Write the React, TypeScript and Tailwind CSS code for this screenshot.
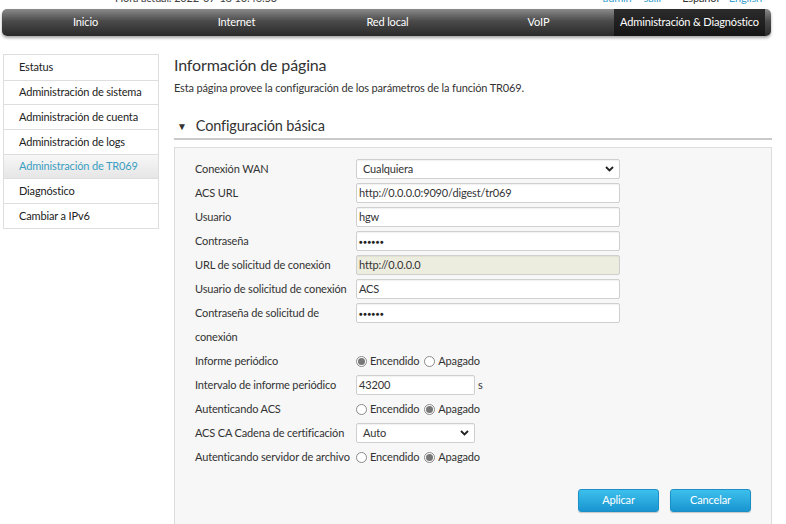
import type { ReactNode } from "react";

const tabs = ["Inicio", "Internet", "Red local", "VoIP", "Administración & Diagnóstico"];

const menu = [
  "Estatus",
  "Administración de sistema",
  "Administración de cuenta",
  "Administración de logs",
  "Administración de TR069",
  "Diagnóstico",
  "Cambiar a IPv6",
];

function Chevron() {
  return (
    <svg width="9" height="6" viewBox="0 0 9 6" className="shrink-0">
      <path d="M1 1l3.5 3.5L8 1" fill="none" stroke="#222" strokeWidth="1.8" />
    </svg>
  );
}

function Field({
  children,
  w = "w-[264px]",
  tone = "bg-white",
}: {
  children: ReactNode;
  w?: string;
  tone?: string;
}) {
  return (
    <div
      className={`my-[2px] flex h-[20px] items-center rounded-[2px] border border-[#cfcfcf] px-[2px] text-[11px] text-[#333] shadow-[inset_0_1px_1px_rgba(0,0,0,0.06)] ${w} ${tone}`}
    >
      {children}
    </div>
  );
}

function Select({ value, w }: { value: string; w?: string }) {
  return (
    <Field w={w}>
      <span className="flex-1 pl-[4px]">{value}</span>
      <span className="pr-[3px]">
        <Chevron />
      </span>
    </Field>
  );
}

function Dots() {
  return <span className="text-[6px] tracking-[0.6px] text-[#222]">●●●●●●</span>;
}

function Radio({ on }: { on?: boolean }) {
  return (
    <span className="flex size-[11px] items-center justify-center rounded-full border border-[#8a8a8a] bg-white">
      {on && <span className="size-[7px] rounded-full bg-[#777]" />}
    </span>
  );
}

function Radios({ first }: { first: boolean }) {
  return (
    <div className="flex h-[24px] items-center text-[11px] text-[#333]">
      <Radio on={first} />
      <span className="ml-[3px]">Encendido</span>
      <span className="ml-[5px]">
        <Radio on={!first} />
      </span>
      <span className="ml-[3px]">Apagado</span>
    </div>
  );
}

function Row({ label, children }: { label: string; children: ReactNode }) {
  return (
    <div className="flex items-start">
      <div className="w-[181px] shrink-0 pl-[20px] pr-[2px] text-[11px] leading-[24px] text-[#333]">{label}</div>
      <div className="flex items-center">{children}</div>
    </div>
  );
}

export default function App() {
  return (
    <div className="h-[524px] w-[786px] overflow-hidden bg-white font-['Lato','Noto_Sans',sans-serif] tracking-[-0.15px]">
      {/* cut-off strip above the bar */}
      <div className="relative flex h-[9px] overflow-hidden text-[11px] leading-[14px]">
        <span className="ml-[115px] -mt-[9px] text-[#444]">Hora actual: 2022-07-18 10:46:53</span>
        <span className="ml-auto -mt-[9px] text-[#3a9fd0]">admin</span>
        <span className="ml-[12px] -mt-[9px] text-[#3a9fd0]">salir</span>
        <span className="ml-[20px] -mt-[9px] text-[#333]">Español</span>
        <span className="ml-[10px] mr-[24px] -mt-[9px] text-[#3a9fd0]">English</span>
      </div>

      <nav className="ml-[2px] flex h-[27px] w-[769px] items-stretch overflow-hidden rounded-[5px] bg-[linear-gradient(#8a8a8a,#4a4a4a_45%,#2a2a2a)] pl-[8px] pr-[6px] shadow-[0_2px_3px_rgba(0,0,0,0.35)]">
        {tabs.map((t, i) => (
          <div
            key={t}
            className={`flex w-[151px] items-center justify-center whitespace-nowrap text-[11px] text-white ${
              i === 4 ? "bg-[linear-gradient(#2c2c2c,#151515)]" : ""
            }`}
          >
            {t}
          </div>
        ))}
      </nav>

      <div className="mt-[18px] flex items-start">
        <ul className="ml-[3px] w-[156px] shrink-0 border border-[#dedede] text-[11px]">
          {menu.map((m, i) => (
            <li
              key={m}
              className={`flex h-[24.7px] items-center border-[#dedede] pl-[15px] ${i > 0 ? "border-t" : ""} ${
                i === 4
                  ? "bg-[linear-gradient(#f7f7f7,#e6e6e6)] text-[#3a9fc2]"
                  : "bg-white text-[#222]"
              }`}
            >
              {m}
            </li>
          ))}
        </ul>

        <main className="ml-[15px] flex-1">
          <h1 className="text-[16px] leading-[22px] text-[#333]">Información de página</h1>
          <p className="mt-[4px] text-[11px] leading-[16px] text-[#333]">
            Esta página provee la configuración de los parámetros de la función TR069.
          </p>

          <div className="mt-[20px] flex h-[20px] w-[598px] items-center text-[14.5px] text-[#333]">
            <span className="ml-[3px] text-[10px]">▼</span>
            <span className="ml-[9px]">Configuración básica</span>
          </div>
          <div className="mt-[2px] h-[2px] w-[598px] bg-[#c9c9c9]" />

          <section className="mt-[7px] h-[400px] w-[598px] border border-[#dcdcdc] bg-[#f7f7f7] pt-[9px]">
            <Row label="Conexión WAN">
              <Select value="Cualquiera" />
            </Row>
            <Row label="ACS URL">
              <Field>http://0.0.0.0:9090/digest/tr069</Field>
            </Row>
            <Row label="Usuario">
              <Field>hgw</Field>
            </Row>
            <Row label="Contraseña">
              <Field>
                <Dots />
              </Field>
            </Row>
            <Row label="URL de solicitud de conexión">
              <Field tone="bg-[#ececdf]">http://0.0.0.0</Field>
            </Row>
            <Row label="Usuario de solicitud de conexión">
              <Field>ACS</Field>
            </Row>
            <Row label="Contraseña de solicitud de conexión">
              <Field>
                <Dots />
              </Field>
            </Row>
            <Row label="Informe periódico">
              <Radios first />
            </Row>
            <Row label="Intervalo de informe periódico">
              <Field w="w-[119px]">43200</Field>
              <span className="ml-[3px] text-[11px] text-[#333]">s</span>
            </Row>
            <Row label="Autenticando ACS">
              <Radios first={false} />
            </Row>
            <Row label="ACS CA Cadena de certificación">
              <Select value="Auto" w="w-[119px]" />
            </Row>
            <Row label="Autenticando servidor de archivo">
              <Radios first={false} />
            </Row>

            <div className="mt-[20px] flex justify-end gap-[11px] pr-[20px]">
              {["Aplicar", "Cancelar"].map((b) => (
                <button
                  key={b}
                  type="button"
                  className="h-[23px] w-[81px] rounded-[3px] border border-[#1b8fc6] bg-[linear-gradient(#3cc0ec,#1995d0)] text-[11px] text-white shadow-[0_1px_1px_rgba(0,0,0,0.2)]"
                >
                  {b}
                </button>
              ))}
            </div>
          </section>
        </main>
      </div>
    </div>
  );
}
